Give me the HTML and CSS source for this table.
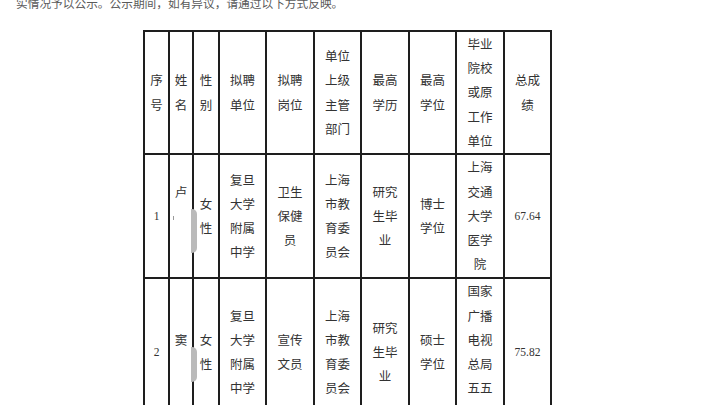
FILE: index.html
```html
<!DOCTYPE html>
<html lang="zh-CN">
<head>
<meta charset="utf-8">
<title>公示</title>
<link rel="stylesheet" href="styles.css">
</head>
<body>
<p class="intro">实情况予以公示。公示期间，如有异议，请通过以下方式反映。</p>
<div class="sheet">
  <div class="cell">序号</div>
  <div class="cell">姓名</div>
  <div class="cell">性别</div>
  <div class="cell">拟聘单位</div>
  <div class="cell">拟聘岗位</div>
  <div class="cell">单位上级主管部门</div>
  <div class="cell">最高学历</div>
  <div class="cell">最高学位</div>
  <div class="cell">毕业院校或原工作单位</div>
  <div class="cell">总成绩</div>

  <div class="cell num">1</div>
  <div class="cell name"><span class="lines">卢<br><i class="tick"></i><br>&nbsp;</span></div>
  <div class="cell gender">女性<span class="blur b1"></span></div>
  <div class="cell">复旦大学附属中学</div>
  <div class="cell">卫生保健员</div>
  <div class="cell">上海市教育委员会</div>
  <div class="cell">研究生毕业</div>
  <div class="cell">博士学位</div>
  <div class="cell">上海交通大学医学院</div>
  <div class="cell num">67.64</div>

  <div class="cell num">2</div>
  <div class="cell name"><span class="lines">窦<br>&nbsp;</span></div>
  <div class="cell gender">女性<span class="blur b2"></span></div>
  <div class="cell">复旦大学附属中学</div>
  <div class="cell">宣传文员</div>
  <div class="cell">上海市教育委员会</div>
  <div class="cell">研究生毕业</div>
  <div class="cell">硕士学位</div>
  <div class="cell">国家广播电视总局五五二台</div>
  <div class="cell num">75.82</div>
</div>
</body>
</html>
```
FILE: styles.css
```css
html, body {
  margin: 0;
  padding: 0;
  background: #ffffff;
  overflow: hidden;
}
body {
  font-family: "Noto Sans CJK SC", "Liberation Serif", sans-serif;
  color: #333333;
}
.intro {
  margin: -5px 0 0 16px;
  font-size: 11.7px;
  line-height: 16px;
  color: #5a5a5a;
  white-space: nowrap;
}
.sheet {
  display: grid;
  grid-template-columns: 23px 22px 24px 45px 46px 45px 46px 45px 46px 45px;
  grid-template-rows: 121px 122px 146px;
  gap: 2px;
  padding: 2px;
  width: max-content;
  margin: 19px 0 0 143px;
  background: #1e1e1e;
}
.cell {
  background: #ffffff;
  display: flex;
  align-items: center;
  justify-content: center;
  text-align: center;
  padding: 0 7px;
  font-size: 12.5px;
  line-height: 24.2px;
  color: #333333;
  overflow-wrap: anywhere;
}
.cell.num {
  font-family: "Liberation Serif", serif;
  font-size: 11.5px;
  padding: 0 2px;
}
.cell.name {
  padding: 0;
}
.lines {
  display: block;
  width: 100%;
  text-align: center;
}
.gender {
  position: relative;
  padding: 0 5px;
}
.blur {
  position: absolute;
  left: -3px;
  width: 6px;
  background: #bababa;
  border-radius: 0 5px 5px 0;
}
.b1 {
  top: 54px;
  height: 44px;
}
.b2 {
  top: 68px;
  height: 35px;
}
.tick {
  display: inline-block;
  width: 1px;
  height: 4px;
  background: #9a9a9a;
  margin-right: 16px;
  vertical-align: middle;
}
```
